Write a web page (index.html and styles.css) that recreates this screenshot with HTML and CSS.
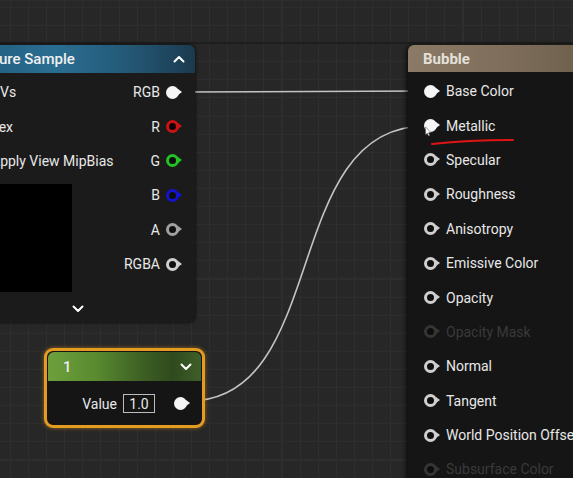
FILE: index.html
```html
<!DOCTYPE html>
<html>
<head>
<meta charset="utf-8">
<link rel="stylesheet" href="styles.css">
</head>
<body>
<div class="canvas">
  <svg class="wires" width="573" height="478" viewBox="0 0 573 478">
    <path d="M183 92 L425 91" class="wire"/>
    <path d="M189 401 C 330 401, 280 126, 425 126" class="wire"/>
  </svg>

  <div class="node tex">
    <div class="tex-head">
      <span class="title">Texture Sample</span>
      <svg class="chev" width="12" height="8" viewBox="0 0 12 8"><polyline points="1.5,6.5 6,2 10.5,6.5"/></svg>
    </div>
    <div class="tex-body">
      <div class="col-in">
        <div class="row"><span class="pin in"></span><span class="lbl">UVs</span></div>
        <div class="row"><span class="pin in"></span><span class="lbl">Tex</span></div>
        <div class="row"><span class="pin in"></span><span class="lbl">Apply View MipBias</span></div>
        <div class="preview"></div>
      </div>
      <div class="col-out">
        <div class="row out"><span class="lbl">RGB</span><span class="pin on white"></span></div>
        <div class="row out"><span class="lbl">R</span><span class="pin red"></span></div>
        <div class="row out"><span class="lbl">G</span><span class="pin green"></span></div>
        <div class="row out"><span class="lbl">B</span><span class="pin blue"></span></div>
        <div class="row out"><span class="lbl">A</span><span class="pin gray"></span></div>
        <div class="row out"><span class="lbl">RGBA</span><span class="pin"></span></div>
      </div>
    </div>
    <div class="tex-foot">
      <svg class="chev" width="12" height="8" viewBox="0 0 12 8"><polyline points="1.5,1.5 6,6 10.5,1.5"/></svg>
    </div>
  </div>

  <div class="node const">
    <div class="const-head">
      <span class="title">1</span>
      <svg class="chev" width="12" height="8" viewBox="0 0 12 8"><polyline points="1.5,1.5 6,6 10.5,1.5"/></svg>
    </div>
    <div class="const-body">
      <span class="lbl">Value</span>
      <span class="valbox">1.0</span>
      <span class="pin on white"></span>
    </div>
  </div>

  <div class="node bubble">
    <div class="bub-head"><span class="title">Bubble</span></div>
    <div class="bub-body">
      <div class="row"><span class="pin on white"></span><span class="lbl">Base Color</span></div>
      <div class="row"><span class="pin on white"></span><span class="lbl">Metallic</span></div>
      <div class="row"><span class="pin"></span><span class="lbl">Specular</span></div>
      <div class="row"><span class="pin"></span><span class="lbl">Roughness</span></div>
      <div class="row"><span class="pin"></span><span class="lbl">Anisotropy</span></div>
      <div class="row"><span class="pin"></span><span class="lbl">Emissive Color</span></div>
      <div class="row"><span class="pin"></span><span class="lbl">Opacity</span></div>
      <div class="row dim"><span class="pin"></span><span class="lbl">Opacity Mask</span></div>
      <div class="row"><span class="pin"></span><span class="lbl">Normal</span></div>
      <div class="row"><span class="pin"></span><span class="lbl">Tangent</span></div>
      <div class="row"><span class="pin"></span><span class="lbl">World Position Offset</span></div>
      <div class="row dim"><span class="pin"></span><span class="lbl">Subsurface Color</span></div>
    </div>
  </div>

  <svg class="overlay" width="573" height="478" viewBox="0 0 573 478">
    <path d="M432 144 Q 470 140 513 140" class="redline"/>
    <polygon points="425.5,127 425.5,135 427.2,133.3 428.6,136 429.8,135.4 428.5,132.8 431,132.6" class="cursor"/>
  </svg>
</div>
</body>
</html>
```

FILE: styles.css
```css
* { box-sizing: border-box; }
html, body { margin: 0; padding: 0; background: #272727; }
.canvas {
  position: relative;
  width: 573px;
  height: 478px;
  overflow: hidden;
  font-family: Roboto, "Liberation Sans", sans-serif;
  font-size: 14px;
  color: #e8e8e8;
  background-color: #272727;
  background-image:
    linear-gradient(to bottom, transparent 42px, #1e1e1e 42px, #1e1e1e 44px, transparent 44px),
    repeating-linear-gradient(to bottom, #2e2e2e 0, #2e2e2e 1px, transparent 1px, transparent 18.1px),
    repeating-linear-gradient(to right, #2e2e2e 0, #2e2e2e 1px, transparent 1px, transparent 18.1px);
  background-position: 0 0, 0 6.8px, 10px 0;
}
.wires, .overlay { position: absolute; left: 0; top: 0; }
.overlay { z-index: 5; }
.wire { fill: none; stroke: #c4c4c4; stroke-width: 1.6; }
.redline { fill: none; stroke: #e01414; stroke-width: 2; stroke-linecap: round; }
.cursor { fill: #ffffff; stroke: #444; stroke-width: 0.5; }

.node { position: absolute; }
.chev polyline { fill: none; stroke: #ffffff; stroke-width: 2; stroke-linecap: round; stroke-linejoin: round; }
.title { white-space: nowrap; }
.lbl { white-space: nowrap; }

/* pins */
.pin {
  position: relative;
  display: inline-block;
  flex: none;
  width: 13px;
  height: 13px;
  border-radius: 50%;
  border: 3.2px solid #cfcfcf;
  color: #cfcfcf;
  background: #0e0e0e;
}
.pin::after {
  content: "";
  position: absolute;
  right: -6px;
  top: 50%;
  margin-top: -3.5px;
  border-left: 4px solid currentColor;
  border-top: 3.5px solid transparent;
  border-bottom: 3.5px solid transparent;
}
.pin.on { background: #f6f6f6; border-color: #f6f6f6; color: #f6f6f6; }
.pin.red { border-color: #c81414; color: #c81414; background: #120000; }
.pin.green { border-color: #22c222; color: #22c222; }
.pin.blue { border-color: #1414d0; color: #1414d0; }
.pin.gray { border-color: #a0a0a0; color: #a0a0a0; }

/* texture sample node */
.tex {
  left: -40px;
  top: 45px;
  width: 235px;
  background: #1b1b1b;
  border-radius: 6px;
  box-shadow: 0 0 3px 1px rgba(0,0,0,0.55);
}
.tex-head {
  height: 28px;
  border-radius: 6px 6px 0 0;
  background: linear-gradient(90deg, #21597a 0%, #2a6e92 40%, #245a78 70%, #1b3a4e 100%);
  display: flex;
  align-items: center;
  justify-content: space-between;
  padding: 0 10px 0 10px;
  font-size: 15px;
  font-weight: 500;
  color: #f0f0f0;
}
.tex-body {
  display: flex;
  justify-content: space-between;
  padding-top: 2px;
}
.col-in { padding-left: 10px; }
.row {
  height: 34.4px;
  display: flex;
  align-items: center;
}
.col-in .row .lbl { margin-left: 8px; }
.preview {
  margin-top: 6px;
  width: 102px;
  height: 108px;
  background: #000;
}
.col-out { padding-right: 16.5px; }
.row.out { justify-content: flex-end; }
.row.out .lbl { margin-right: 5.5px; }
.tex-foot {
  display: flex;
  justify-content: center;
  padding: 13px 0 9px;
}
.tex-foot .chev { display: block; }

/* constant node */
.const {
  left: 44px;
  top: 348px;
  width: 161px;
  height: 80px;
  border: 3px solid #e39b22;
  border-radius: 9px;
  background: #151515;
  box-shadow: 0 0 4px rgba(220,140,30,0.6);
  overflow: hidden;
}
.const-head {
  height: 29px;
  margin: 1px 1px 0;
  border-radius: 6px 6px 0 0;
  background: linear-gradient(90deg, #6da03c 0%, #5a8c30 30%, #3c5f23 62%, #2f4a1d 82%, #3f5f29 100%);
  display: flex;
  align-items: center;
  justify-content: space-between;
  padding: 0 9px 0 15px;
  font-size: 15px;
  font-weight: 500;
  color: #eaeaea;
}
.const-body {
  height: 45px;
  display: flex;
  align-items: center;
  justify-content: flex-end;
  padding-right: 15.5px;
}
.valbox {
  margin-left: 6px;
  margin-right: 18.5px;
  width: 32px;
  height: 19px;
  border: 1.5px solid #bdbdbd;
  display: flex;
  align-items: center;
  justify-content: center;
  font-size: 14px;
}

/* bubble node */
.bubble {
  left: 408px;
  top: 45px;
  width: 200px;
  height: 460px;
  background: #151515;
  border-radius: 6px 0 0 0;
  box-shadow: -2px 0 4px rgba(0,0,0,0.7);
}
.bub-head {
  height: 27px;
  border-radius: 6px 0 0 0;
  background: linear-gradient(90deg, #8a7a66 0%, #7d6d5a 50%, #6a5a49 100%);
  display: flex;
  align-items: center;
  padding-left: 15px;
  font-size: 15px;
  font-weight: 700;
  color: #e4e0da;
}
.bub-body { padding: 2px 0 0 15.5px; }
.bub-body .lbl { margin-left: 9.5px; }
.row.dim { color: #3a3a3a; }
.row.dim .pin { border-color: #353535; color: #353535; }
```
